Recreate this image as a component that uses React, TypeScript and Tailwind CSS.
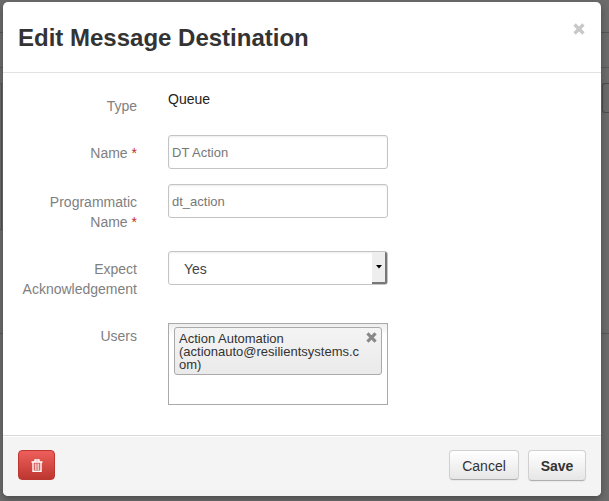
import type { ReactNode } from "react";

function Cross({ className }: { className: string }) {
  return (
    <svg viewBox="0 0 10 10" className={className} aria-hidden="true">
      <path d="M1.3 1.3L8.7 8.7M8.7 1.3L1.3 8.7" stroke="currentColor" strokeWidth="2.8" fill="none" />
    </svg>
  );
}

function Row({ label, htmlFor, required, children }: { label: string; htmlFor: string; required?: boolean; children: ReactNode }) {
  return (
    <div className="flex gap-[30px]">
      <label htmlFor={htmlFor} className="w-[120px] shrink-0 pt-2 pr-px pb-1 text-right text-[#808080]">
        {label} {required && <span className="text-[#c42a2a]">*</span>}
      </label>
      <div className="w-[220px]">{children}</div>
    </div>
  );
}

const field =
  "block h-[34px] w-full rounded-[3px] border border-[#c4c4c4] bg-white shadow-[inset_0_1px_2px_rgba(0,0,0,0.08)]";

const button =
  "rounded-[4px] border border-[#d0d0d0] border-b-[#b0b0b0] bg-linear-to-b from-white to-[#e6e6e6] pt-px text-[#333] shadow-[0_1px_1px_rgba(0,0,0,0.05)]";

function Backdrop() {
  return (
    <div className="absolute inset-0 flex flex-col overflow-hidden bg-[#6b6b6b]" aria-hidden="true">
      <div className="h-[33px] border-b border-[#555]" />
      <div className="h-[35px] border-b border-[#5a5a5a]" />
      <div className="mt-[15px] flex justify-between">
        <div className="h-[147px] w-[2px] border-y border-r border-[#555]" />
        <div className="h-[30px] w-[7px] rounded-l-[3px] border border-r-0 border-[#4d4d4d]" />
      </div>
      <div className="mt-[103px] h-px bg-[#585858]" />
    </div>
  );
}

export default function App() {
  return (
    <div className="relative min-h-screen pt-[2px] pr-2 pb-[5px] pl-[3px] font-['Liberation_Sans',Arial,sans-serif] text-[14px] leading-5 text-[#333]">
      <Backdrop />
      <div role="dialog" aria-labelledby="dialog-title" className="relative overflow-hidden rounded-[5px] bg-white shadow-[0_3px_7px_rgba(0,0,0,0.3)]">
        <header className="flex items-start justify-between border-b border-[#e2e2e2] px-[15px] pt-4 pb-[14px]">
          <h2 id="dialog-title" className="text-[24px] leading-10 font-bold text-[#333]">
            Edit Message Destination
          </h2>
          <button type="button" aria-label="Close" className="mt-1 p-px text-[#c8c8c8]">
            <Cross className="size-3" />
          </button>
        </header>

        <form className="flex flex-col gap-[15px] px-[15px] pt-[15px] pb-[30px]">
          <Row label="Type" htmlFor="type">
            <output id="type" className="block pt-px text-[#222]">Queue</output>
          </Row>
          <Row label="Name" htmlFor="name" required>
            <input id="name" defaultValue="DT Action" className={`${field} px-[3px] text-[13px] text-[#777]`} />
          </Row>
          <Row label="Programmatic Name" htmlFor="programmatic" required>
            <input id="programmatic" defaultValue="dt_action" className={`${field} px-[3px] text-[13px] text-[#777]`} />
          </Row>
          <Row label="Expect Acknowledgement" htmlFor="ack">
            <div className="relative">
              <select id="ack" defaultValue="Yes" className={`${field} appearance-none pt-px pl-[15px] text-[#444]`}>
                <option>Yes</option>
                <option>No</option>
              </select>
              <span className="pointer-events-none absolute inset-y-px right-px flex w-[15px] items-center justify-center rounded-r-[2px] border-r-2 border-b-2 border-[#777] bg-[#eee]">
                <svg viewBox="0 0 6 4" className="h-1 w-1.5" aria-hidden="true">
                  <path d="M0 0H6L3 3.6Z" fill="#000" />
                </svg>
              </span>
            </div>
          </Row>
          <Row label="Users" htmlFor="users">
            <div id="users" className="mt-[5px] h-[82px] border border-[#aaa] bg-linear-to-b from-[#eee] to-white to-15% px-[5px] pt-[3px]">
              <div className="flex items-start justify-between rounded-[3px] border border-[#aaa] bg-linear-to-b from-[#f4f4f4] to-[#eaeaea] pt-1 pr-1 pb-[3px] pl-1 text-[13px] leading-[13px] text-[#333]">
                <span className="w-[182px] break-all">
                  Action Automation
                  <br />
                  (actionauto@resilientsystems.com)
                </span>
                <button type="button" aria-label="Remove Action Automation" className="text-[#888]">
                  <Cross className="size-[11px]" />
                </button>
              </div>
            </div>
          </Row>
        </form>

        <footer className="flex items-start justify-between border-t border-[#d9d9d9] bg-[#f4f4f4] px-[15px] pt-[14px] pb-[15px] shadow-[inset_0_1px_0_#fff]">
          <button type="button" aria-label="Delete" className="flex h-[30px] w-[37px] items-center justify-center rounded-[4px] border border-[#bd362f] bg-linear-to-b from-[#ee5f5b] to-[#bd362f] text-white">
            <svg viewBox="0 0 12 13" className="h-[13px] w-3" fill="none" stroke="currentColor" aria-hidden="true">
              <path d="M0.5 3H11.5M4 3V1H8V3M2 3V12.3H10V3" strokeWidth="1.4" />
              <path d="M4.3 4.5V11M6 4.5V11M7.7 4.5V11" strokeWidth="0.9" />
            </svg>
          </button>
          <div className="flex gap-[9px]">
            <button type="button" className={`${button} h-[30px] w-[70px]`}>Cancel</button>
            <button type="submit" className={`${button} h-[31px] w-[58px] font-bold`}>Save</button>
          </div>
        </footer>
      </div>
    </div>
  );
}
